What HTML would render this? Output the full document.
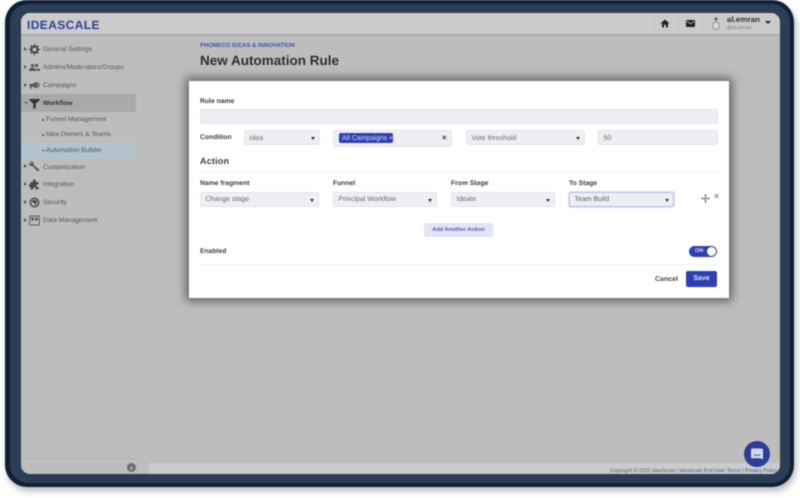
<!DOCTYPE html>
<html><head><meta charset="utf-8">
<style>
html,body{margin:0;padding:0;width:800px;height:498px;overflow:hidden;background:#fff}
body{font-family:"Liberation Sans",sans-serif;position:relative;text-rendering:geometricPrecision}
#w{position:absolute;left:0;top:0;width:800px;height:498px;filter:blur(.45px)}
.a{position:absolute;white-space:nowrap}
.t{position:absolute;white-space:nowrap;line-height:12px;height:12px}
.s{position:absolute;height:16px;background:#eeeff3;border:1px solid #e4e5ea;border-radius:2px;box-sizing:content-box;font-size:7px;line-height:16px;color:#6a6a6a;text-indent:4.5px;white-space:nowrap}
.s i{position:absolute;right:4px;top:7px;width:0;height:0;border:2.2px solid transparent;border-top:3px solid #333;border-bottom:0}
.l{position:absolute;font-size:6.8px;font-weight:bold;color:#3c3c3c;line-height:10px;white-space:nowrap}
.n{position:absolute;left:43px;font-size:6.6px;color:#555;line-height:10px;white-space:nowrap}
.ar{position:absolute;left:24px;width:0;height:0;border:2px solid transparent;border-left:3px solid #555;border-right:0}
.ic{position:absolute;left:29px;width:11px;height:11px}
</style></head><body><div id="w">
<div class="a" style="left:5px;top:0;width:789px;height:487px;background:#0f2038;border-radius:22px;box-shadow:2px 4px 7px rgba(0,0,0,.28)"></div>
<div class="a" style="left:10px;top:4px;width:780px;height:479px;background:#2c3e56;border-radius:18px"></div>
<div class="a" style="left:21px;top:13px;width:759px;height:461px;background:#bdbdbd;border-radius:9px;overflow:hidden">
  <div class="a" style="left:0;top:0;width:759px;height:21px;background:#cbcbcb;border-bottom:2px solid #aeaeae"></div>
  <div class="a" style="left:0;top:81px;width:115px;height:18px;background:#a9a9a9"></div>
  <div class="a" style="left:0;top:130px;width:115px;height:16px;background:#b3c3cc"></div>
  <div class="a" style="left:0;top:445px;width:115px;height:1px;background:#adadad"></div>
  <div class="a" style="left:128px;top:450px;width:631px;height:11px;background:#cbcbcb"></div>
  <div class="a" style="left:633px;top:0;width:1px;height:21px;background:#c2c2c2"></div>
  <div class="a" style="left:657px;top:0;width:1px;height:21px;background:#c2c2c2"></div>
  <div class="a" style="left:681px;top:0;width:1px;height:21px;background:#c2c2c2"></div>
</div>
<div class="t" style="left:27px;top:18px;font-size:12px;font-weight:bold;color:#2f3f9e;letter-spacing:.4px;line-height:14px;height:14px">IDEASCALE</div>

<svg class="a" style="left:660px;top:19px" width="10" height="9" viewBox="0 0 10 9"><path d="M5 .5 9.5 4.5H8V8.5H6V5.8H4V8.5H2V4.5H.5Z" fill="#222"/></svg>
<svg class="a" style="left:686px;top:20px" width="9" height="7" viewBox="0 0 9 7"><rect width="9" height="7" rx=".7" fill="#222"/><path d="M.6 1.2 4.5 3.8 8.4 1.2" stroke="#cbcbcb" stroke-width=".8" fill="none"/></svg>
<svg class="a" style="left:711px;top:16px" width="10" height="15" viewBox="0 0 10 15"><circle cx="5" cy="3" r="1.5" fill="#555"/><path d="M2 7.5Q5 4.5 8 7.5V12Q5 15 2 12Z" fill="#d8d8d8" stroke="#777" stroke-width=".6"/></svg>
<div class="t" style="left:727px;top:14px;font-size:8px;font-weight:bold;color:#333">al.emran</div>
<div class="t" style="left:727px;top:22px;font-size:5px;color:#777">@al.emran</div>
<div class="a" style="left:765px;top:21px;width:0;height:0;border:3.2px solid transparent;border-top:3.5px solid #222;border-bottom:0"></div>

<!-- sidebar -->
<div class="ar" style="top:47px"></div>
<svg class="ic" style="top:44px" viewBox="0 0 11 11"><circle cx="5.5" cy="5.5" r="3" fill="none" stroke="#444" stroke-width="2"/><path d="M5.5 0V11M0 5.5H11M1.7 1.7 9.3 9.3M9.3 1.7 1.7 9.3" stroke="#444" stroke-width="1.5" stroke-dasharray="1.8 7.4"/></svg>
<div class="n" style="top:45px">General Settings</div>
<div class="ar" style="top:65px"></div>
<svg class="ic" style="top:62px" viewBox="0 0 11 11"><circle cx="3.5" cy="3.5" r="1.6" fill="#555"/><circle cx="7.5" cy="3.5" r="1.6" fill="#555"/><path d="M0 9V7.4Q1 5.8 3.5 5.8T7 7.4V9ZM7.8 9V6.8Q9 5.8 11 7.4V9Z" fill="#555"/></svg>
<div class="n" style="top:63px">Admins/Moderators/Groups</div>
<div class="ar" style="top:83px"></div>
<svg class="ic" style="top:80px" viewBox="0 0 11 11"><path d="M.5 4H3L8.5 1.5V8.5L3 6.5H2.5L3 9H1.5L1 6.5H.5Z" fill="#555"/><rect x="9.2" y="3" width="1.3" height="4" fill="#555"/></svg>
<div class="n" style="top:81px">Campaigns</div>
<div class="a" style="left:24px;top:101.5px;width:0;height:0;border:2px solid transparent;border-top:2.5px solid #555;border-bottom:0"></div>
<svg class="ic" style="top:98px" viewBox="0 0 11 11"><path d="M.5 1H10.5V2.5L6.7 5.5V10.5H4.3V5.5L.5 2.5Z" fill="#333"/></svg>
<div class="n" style="top:99px;font-weight:bold;color:#333">Workflow</div>

<div class="a" style="left:42px;top:118.5px;width:2px;height:2px;background:#444;border-radius:50%"></div>
<div class="n" style="left:46px;top:115px">Funnel Management</div>
<div class="a" style="left:42px;top:133.5px;width:2px;height:2px;background:#444;border-radius:50%"></div>
<div class="n" style="left:46px;top:130px">Idea Owners &amp; Teams</div>
<div class="a" style="left:42px;top:150px;width:3px;height:1px;background:#4a5d74"></div>
<div class="n" style="left:46px;top:146px;color:#3f5a76">Automation Builder</div>

<div class="ar" style="top:164px"></div>
<svg class="ic" style="top:161px" viewBox="0 0 11 11"><path d="M1 .8 3 .5 4.6 2.2 4.2 3.8 10.3 9 9 10.4 3.4 4.8 1.6 5 .2 3.4.5 1.8 2 3.2 3 2.4Z" fill="#444"/></svg>
<div class="n" style="top:163px">Customization</div>
<div class="ar" style="top:182px"></div>
<svg class="ic" style="top:179px" viewBox="0 0 11 11"><path d="M4 1.5A1.3 1.3 0 0 1 6.6 1.5V3H9.5V5.4H8.7A1.3 1.3 0 0 0 8.7 8H9.5V10.5H6.8V9.6A1.3 1.3 0 0 0 4.2 9.6V10.5H1.5V7.8H.8A1.3 1.3 0 0 1 .8 5.2H1.5V3H4Z" fill="#444"/></svg>
<div class="n" style="top:180px">Integration</div>
<div class="ar" style="top:200px"></div>
<svg class="ic" style="top:197px" viewBox="0 0 11 11"><circle cx="5.5" cy="5.5" r="4.2" fill="none" stroke="#444" stroke-width="1.4"/><path d="M5.5 2.8 8 3.8Q8 7 5.5 8.4Z" fill="#444"/><path d="M5.5 5.5H3V3.8L5.5 2.8Z" fill="#444"/></svg>
<div class="n" style="top:198px">Security</div>
<div class="ar" style="top:218px"></div>
<svg class="ic" style="top:215px" viewBox="0 0 11 11"><rect x=".7" y="1" width="9.6" height="9" fill="none" stroke="#555" stroke-width=".9"/><rect x="2.2" y="2.5" width="2.6" height="3" fill="#555"/><rect x="6.2" y="2.5" width="2.6" height="3" fill="#555"/></svg>
<div class="n" style="top:216px">Data Management</div>

<div class="a" style="left:127px;top:463px;width:9px;height:9px;border-radius:50%;background:#6f6f6f"></div>
<div class="a" style="left:130px;top:465.5px;width:0;height:0;border:2px solid transparent;border-right:2.5px solid #ddd;border-left:0"></div>
<div class="t" style="left:610px;top:468px;font-size:5.2px;color:#5c5c5c;height:6px;line-height:6px;width:167px;overflow:hidden">Copyright © 2022 IdeaScale | <span style="color:#3f5a88">IdeaScale End User Terms</span> | <span style="color:#3f5a88">Privacy Policy</span></div>
<div class="a" style="left:744px;top:441px;width:26px;height:26px;background:#2f3c96;border-radius:50%"></div>
<svg class="a" style="left:750px;top:447px" width="14" height="14" viewBox="0 0 14 14"><path d="M2 1.5H12Q13 1.5 13 2.5V12.5L10.5 11.2H2Q1 11.2 1 10.2V2.5Q1 1.5 2 1.5Z" fill="#d6d9ee"/><path d="M3.8 7.5Q7 9.5 10.2 7.5" stroke="#2f3c96" stroke-width=".9" fill="none"/></svg>

<div class="t" style="left:200px;top:39.5px;font-size:6px;font-weight:bold;color:#4651a8">PHONECO IDEAS &amp; INNOVATION</div>
<div class="t" style="left:200px;top:52px;font-size:13.5px;font-weight:bold;color:#2e2e2e;height:17px;line-height:17px">New Automation Rule</div>

<!-- modal -->
<div class="a" style="left:189px;top:81px;width:540px;height:217px;background:#fff;box-shadow:0 0 9px 3px rgba(0,0,0,.5)"></div>
<div class="l" style="left:200px;top:97px">Rule name</div>
<div class="s" style="left:200px;top:109px;width:516px;height:13px"></div>
<div class="l" style="left:200px;top:133px">Condition</div>
<div class="s" style="left:244px;top:130px;width:74px;height:13px;line-height:15px">Idea<i style="top:6px"></i></div>
<div class="s" style="left:333px;top:130px;width:117px;height:15px"></div>
<div class="a" style="left:338.5px;top:133px;width:54.5px;height:10px;background:#2f3fb3;border-radius:2px;color:#d5d9f5;font-size:7px;line-height:11px;text-indent:3.5px">All Campaigns ×</div>
<div class="a" style="left:442px;top:133px;font-size:8px;line-height:10px;color:#333;font-weight:bold">×</div>
<div class="s" style="left:466px;top:130px;width:117px;height:13px;line-height:15px">Vote threshold<i style="top:6px"></i></div>
<div class="s" style="left:598px;top:130px;width:118px;height:13px;line-height:15px">50</div>
<div class="a" style="left:200px;top:155px;font-size:9px;font-weight:bold;color:#3c3c3c;line-height:12px;letter-spacing:.2px">Action</div>
<div class="a" style="left:200px;top:170.5px;width:517px;height:1px;background:#eeeff1"></div>
<div class="l" style="left:200px;top:179px">Name fragment</div>
<div class="l" style="left:333px;top:179px">Funnel</div>
<div class="l" style="left:451px;top:179px">From Stage</div>
<div class="l" style="left:569px;top:179px">To Stage</div>
<div class="s" style="left:200px;top:192px;width:117px;height:13px;line-height:14px">Change stage<i style="top:6px"></i></div>
<div class="s" style="left:333px;top:192px;width:102px;height:13px;line-height:14px">Principal Workflow<i style="top:6px"></i></div>
<div class="s" style="left:451px;top:192px;width:102px;height:13px;line-height:14px">Ideate<i style="top:6px"></i></div>
<div class="s" style="left:569px;top:192px;width:103px;height:13px;line-height:14px;border-color:#b9c0e6;box-shadow:0 0 0 1px #dfe2f3;color:#5c5c5c">Team Build<i style="top:6px"></i></div>
<svg class="a" style="left:701px;top:194px" width="9" height="9" viewBox="0 0 9 9"><path d="M4.5 0 6 1.8H5V4H7.2V3L9 4.5 7.2 6V5H5V7.2H6L4.5 9 3 7.2H4V5H1.8V6L0 4.5 1.8 3V4H4V1.8H3Z" fill="#777"/></svg>
<div class="a" style="left:714px;top:190.5px;font-size:9px;line-height:11px;color:#888;font-weight:bold">×</div>
<div class="a" style="left:424px;top:223px;width:69px;height:14px;background:#e3e5f6;border-radius:2px;color:#4d59c0;font-size:5.6px;font-weight:bold;line-height:14px;text-align:center">Add Another Action</div>
<div class="l" style="left:200px;top:247px">Enabled</div>
<div class="a" style="left:689px;top:246px;width:28px;height:11px;background:#2f3fb3;border-radius:6px"></div>
<div class="a" style="left:707px;top:247px;width:9px;height:9px;background:#fff;border-radius:50%"></div>
<div class="a" style="left:695px;top:246px;font-size:5.5px;font-weight:bold;color:#d8dcf5;line-height:11.5px">ON</div>
<div class="a" style="left:200px;top:264px;width:517px;height:1px;background:#eeeff1"></div>
<div class="a" style="left:655px;top:273.5px;font-size:7px;font-weight:bold;color:#444;line-height:11px">Cancel</div>
<div class="a" style="left:686px;top:271px;width:31px;height:16px;background:#2f3fb3;border-radius:2px;color:#dfe2f8;font-size:7px;font-weight:bold;line-height:16px;text-align:center">Save</div>
</div></body></html>
